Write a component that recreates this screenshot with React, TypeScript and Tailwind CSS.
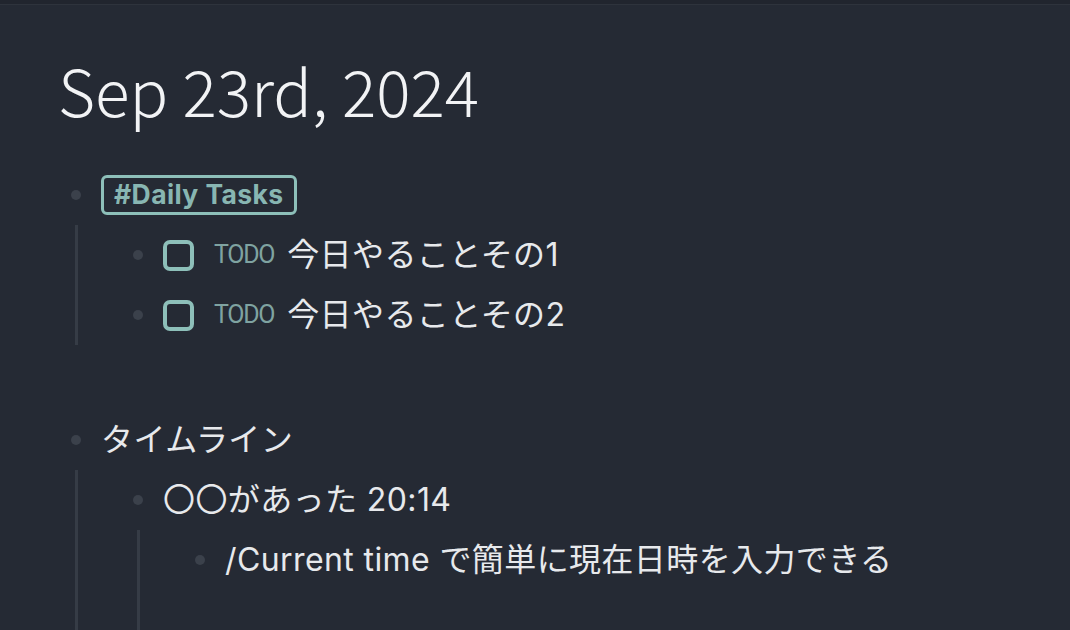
import type { ReactNode } from 'react';

const body = { fontFamily: 'Inter, "Noto Sans CJK JP", sans-serif' };

function Bullet() {
  return (
    <div className="w-[28px] h-full flex items-center justify-center shrink-0">
      <span className="block w-[10px] h-[10px] rounded-full bg-[#3b414b]" />
    </div>
  );
}

function Row({ children }: { children: ReactNode }) {
  return (
    <div className="flex items-center h-[60px]">
      <Bullet />
      <div className="ml-[11px] flex items-center text-[32px] tracking-[0.4px] text-[#e7e9ec]" style={body}>
        {children}
      </div>
    </div>
  );
}

function Children({ children }: { children: ReactNode }) {
  return <div className="ml-[13px] border-l-[3px] border-[#363c46] pl-[46px]">{children}</div>;
}

function Todo({ text }: { text: string }) {
  return (
    <>
      <span className="w-[31px] h-[31px] rounded-[7px] border-4 border-[#8dbfb9] mr-[20px] shrink-0" />
      <span
        className="text-[25px] tracking-[-1.3px] text-[#7fa3a1] mr-[13px]"
        style={{ fontFamily: 'Roboto, sans-serif' }}
      >
        TODO
      </span>
      <span>{text}</span>
    </>
  );
}

export default function App() {
  return (
    <div className="w-[1070px] h-[630px] overflow-hidden bg-[#252a34]">
      <div className="h-[5px] bg-[#21252e] border-b border-[#2e333c]" />
      <div className="pl-[58px] pt-[39px]">
        <h1
          className="text-[64px] font-light leading-[90px] text-[#f2f3f5]"
          style={{ fontFamily: '"Noto Sans CJK JP", sans-serif' }}
        >
          Sep 23rd, 2024
        </h1>
        <div className="pl-[4px] mt-[31px]">
          <Row>
            <span
              className="px-[10px] h-[40px] flex items-center rounded-[6px] border-[3px] border-[#8dbfb9] text-[#88b6b2] text-[26.5px] font-bold"
              style={{ fontFamily: 'Inter, sans-serif' }}
            >
              #Daily Tasks
            </span>
          </Row>
          <Children>
            <Row>
              <Todo text="今日やることその1" />
            </Row>
            <Row>
              <Todo text="今日やることその2" />
            </Row>
          </Children>
          <div className="h-[65px]" />
          <Row>タイムライン</Row>
          <Children>
            <Row>〇〇があった 20:14</Row>
            <Children>
              <Row>/Current time で簡単に現在日時を入力できる</Row>
              <div className="h-[80px]" />
            </Children>
          </Children>
        </div>
      </div>
    </div>
  );
}
